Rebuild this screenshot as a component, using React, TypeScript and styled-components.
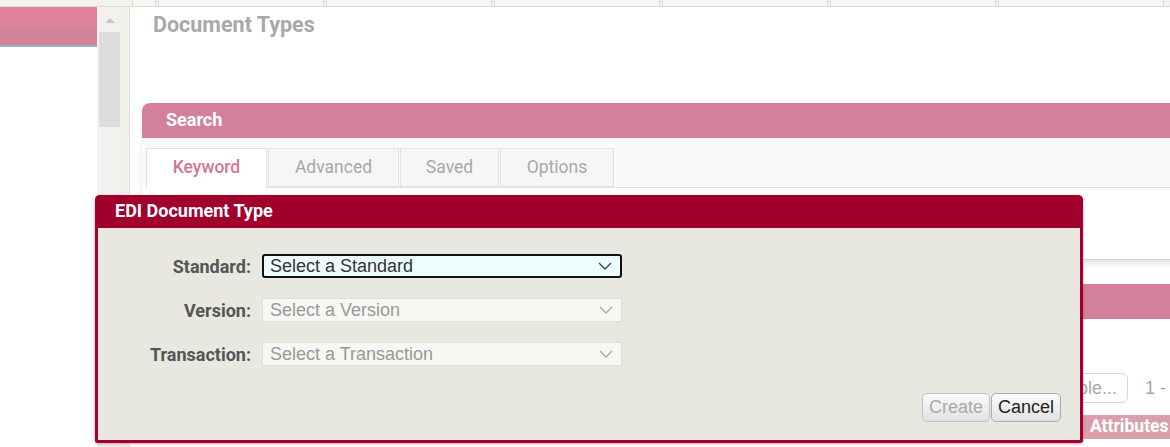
import styled, { createGlobalStyle } from "styled-components";

const GlobalStyle = createGlobalStyle`
  html, body {
    margin: 0;
    padding: 0;
  }
  body {
    width: 1170px;
    height: 447px;
    overflow: hidden;
    background: #f2f2ee;
    font-family: Roboto, "Liberation Sans", sans-serif;
  }
`;

const topTabs = [24, 166, 166, 166, 166, 166, 166];
const searchTabs = [
  { label: "Keyword", width: 121, active: true },
  { label: "Advanced", width: 131, active: false },
  { label: "Saved", width: 99, active: false },
  { label: "Options", width: 114, active: false },
];
const columns = [
  { label: "Name", width: 300 },
  { label: "Description", width: 380 },
  { label: "Version", width: 258 },
  { label: "Attributes", width: 200 },
];
const fields = [
  { label: "Standard:", value: "Select a Standard", focused: true },
  { label: "Version:", value: "Select a Version", focused: false },
  { label: "Transaction:", value: "Select a Transaction", focused: false },
];

const Chevron = ({ color }: { color: string }) => (
  <svg width="14" height="8" viewBox="0 0 14 8">
    <polyline points="1,1 7,7 13,1" fill="none" stroke={color} strokeWidth="1.3" />
  </svg>
);

const App = () => {
  return (
    <>
      <GlobalStyle />
      <Page>
        <TopStrip>
          {topTabs.map((w, i) => (
            <TopTab key={i} $width={w} />
          ))}
        </TopStrip>
        <Body>
          <Sidebar>
            <SideHeader>
              <span />
              <span />
            </SideHeader>
          </Sidebar>
          <ScrollBar>
            <ScrollArrow />
            <ScrollThumb />
          </ScrollBar>
          <Gutter />
          <Main>
            <Title>Document Types</Title>
            <Panel>
              <PanelHeader>Search</PanelHeader>
              <SearchBody>
                <TabRow>
                  {searchTabs.map((t) => (
                    <Tab key={t.label} $width={t.width} $active={t.active}>
                      {t.label}
                    </Tab>
                  ))}
                </TabRow>
                <TabContent />
              </SearchBody>
            </Panel>
            <Panel>
              <PanelHeader />
              <ResultsBody>
                <Toolbar>
                  <GhostButton>Disable...</GhostButton>
                  <Pager>1 - 20 of 20</Pager>
                </Toolbar>
                <HeaderRow>
                  {columns.map((c) => (
                    <HeaderCell key={c.label} $width={c.width}>
                      {c.label}
                    </HeaderCell>
                  ))}
                </HeaderRow>
                <DataRow>
                  <DataCell $width={300}>ANSI X12</DataCell>
                  <DataCell $width={380}>Purchase Order</DataCell>
                  <DataCell $width={258}>004010</DataCell>
                </DataRow>
              </ResultsBody>
            </Panel>
          </Main>
        </Body>

        <Modal>
          <ModalHeader>EDI Document Type</ModalHeader>
          <ModalBody>
            <Form>
              {fields.map((f) => (
                <FieldRow key={f.label}>
                  <Label>{f.label}</Label>
                  <SelectBox $focused={f.focused}>
                    <span>{f.value}</span>
                    <Chevron color={f.focused ? "#444" : "#a8a8a8"} />
                  </SelectBox>
                </FieldRow>
              ))}
            </Form>
            <Footer>
              <Button disabled>Create</Button>
              <Button>Cancel</Button>
            </Footer>
          </ModalBody>
        </Modal>
      </Page>
    </>
  );
};

const Page = styled.div`
  position: relative;
  width: 1170px;
  height: 447px;
  overflow: hidden;
  display: flex;
  flex-direction: column;
`;
const TopStrip = styled.div`
  height: 6px;
  flex-shrink: 0;
  display: flex;
  gap: 2px;
  padding-left: 132px;
  border-bottom: 1px solid #dcdcd6;
  background: #f2f2ee;
`;
const TopTab = styled.div<{ $width: number }>`
  width: ${({ $width }) => $width}px;
  box-sizing: border-box;
  flex-shrink: 0;
  border-left: 1px solid #dadad4;
  border-right: 1px solid #dadad4;
  background: #f6f6f2;
`;
const Body = styled.div`
  flex: 1;
  display: flex;
  min-height: 0;
`;
const Sidebar = styled.div`
  width: 97px;
  flex-shrink: 0;
  background: #fff;
`;
const SideHeader = styled.div`
  display: flex;
  flex-direction: column;
  border-bottom: 2px solid #93b3d3;
  span {
    height: 20px;
    background: #e0809b;
  }
  span + span {
    height: 18px;
    background: #d08399;
  }
`;
const ScrollBar = styled.div`
  width: 21px;
  margin-left: 2px;
  flex-shrink: 0;
  background: #f1f1ef;
  display: flex;
  flex-direction: column;
  align-items: center;
`;
const ScrollArrow = styled.div`
  width: 0;
  height: 0;
  margin: 11px 0 9px;
  border-left: 5px solid transparent;
  border-right: 5px solid transparent;
  border-bottom: 5px solid #c4c4c4;
`;
const ScrollThumb = styled.div`
  width: 100%;
  height: 95px;
  background: #dddddd;
`;
const Gutter = styled.div`
  width: 9px;
  flex-shrink: 0;
  background: #f0f0eb;
  border-right: 1px solid #e4e4de;
`;
const Main = styled.div`
  width: 1140px;
  flex-shrink: 0;
  background: #fff;
  padding-left: 12px;
`;
const Title = styled.h1`
  margin: 6px 0 0 11px;
  height: 24px;
  line-height: 24px;
  font-size: 21.5px;
  font-weight: 700;
  color: #a9a9a9;
`;
const Panel = styled.section`
  margin-top: 66px;
  & + & {
    margin-top: 24px;
  }
`;
const PanelHeader = styled.div`
  height: 35px;
  line-height: 34px;
  padding-left: 24px;
  border-top-left-radius: 8px;
  background: #d4809a;
  color: #fff;
  font-size: 18px;
  font-weight: 700;
`;
const SearchBody = styled.div`
  background: #fafafa;
  padding: 10px 0 0 4px;
  border-bottom: 1px solid #d6d6d6;
  box-shadow: 0 4px 6px rgba(0, 0, 0, 0.1);
`;
const TabRow = styled.div`
  display: flex;
  gap: 1px;
  height: 39px;
  border-bottom: 1px solid #e2e2e2;
`;
const Tab = styled.div<{ $width: number; $active: boolean }>`
  width: ${({ $width }) => $width}px;
  box-sizing: border-box;
  height: ${({ $active }) => ($active ? 40 : 39)}px;
  padding-bottom: ${({ $active }) => ($active ? 3 : 2)}px;
  border: 1px solid #e2e2e2;
  border-bottom: ${({ $active }) => ($active ? "none" : "1px solid #e2e2e2")};
  background: ${({ $active }) => ($active ? "#fff" : "#f6f6f6")};
  color: ${({ $active }) => ($active ? "#cf7891" : "#a8a8a8")};
  font-weight: ${({ $active }) => ($active ? 500 : 400)};
  font-size: 17.5px;
  display: flex;
  align-items: center;
  justify-content: center;
`;
const TabContent = styled.div`
  height: 71px;
  margin-left: -4px;
  background: #fff;
`;
const ResultsBody = styled.div`
  background: #fff;
  padding-top: 54px;
`;
const Toolbar = styled.div`
  display: flex;
  align-items: center;
  justify-content: flex-end;
  gap: 17px;
  height: 30px;
  padding-right: 46px;
`;
const GhostButton = styled.div`
  height: 30px;
  box-sizing: border-box;
  padding: 0 10px;
  border: 1px solid #d6d6d6;
  border-radius: 6px;
  background: #fff;
  color: #a8a8a8;
  font-family: "Liberation Sans", Arial, sans-serif;
  font-size: 18px;
  line-height: 28px;
`;
const Pager = styled.span`
  color: #a8a8a8;
  font-family: "Liberation Sans", Arial, sans-serif;
  font-size: 18px;
`;
const HeaderRow = styled.div`
  display: flex;
  margin-top: 12px;
  height: 24px;
  background: #da9fad;
`;
const HeaderCell = styled.div<{ $width: number }>`
  width: ${({ $width }) => $width}px;
  flex-shrink: 0;
  padding-left: 10px;
  box-sizing: border-box;
  color: #fff;
  font-weight: 700;
  font-size: 17.5px;
  line-height: 22px;
`;
const DataRow = styled.div`
  display: flex;
  height: 24px;
  padding-top: 5px;
`;
const DataCell = styled.div<{ $width: number }>`
  width: ${({ $width }) => $width}px;
  padding-left: 10px;
  box-sizing: border-box;
  color: #777;
  font-size: 16px;
`;

const Modal = styled.div`
  position: absolute;
  left: 95px;
  top: 195px;
  width: 988px;
  height: 248px;
  box-sizing: border-box;
  border: 3px solid #a1002c;
  border-top: none;
  border-radius: 5px 5px 3px 3px;
  background: #e8e8e1;
  box-shadow: 0 1px 3px rgba(161, 0, 44, 0.35);
  display: flex;
  flex-direction: column;
`;
const ModalHeader = styled.div`
  height: 33px;
  margin: 0 -3px;
  padding-left: 20px;
  border-radius: 5px 5px 0 0;
  background: #a1002c;
  color: #fff;
  font-size: 18px;
  font-weight: 700;
  line-height: 32px;
`;
const ModalBody = styled.div`
  flex: 1;
  display: flex;
  flex-direction: column;
  padding: 26px 19px 18px 0;
`;
const Form = styled.div`
  display: flex;
  flex-direction: column;
  gap: 20px;
`;
const FieldRow = styled.div`
  display: grid;
  grid-template-columns: 153px 360px;
  column-gap: 11px;
  align-items: center;
`;
const Label = styled.label`
  text-align: right;
  color: #555;
  font-size: 18px;
  font-weight: 700;
`;
const SelectBox = styled.div<{ $focused: boolean }>`
  height: 24px;
  box-sizing: border-box;
  display: flex;
  align-items: center;
  justify-content: space-between;
  padding: 0 8px 0 ${({ $focused }) => ($focused ? 6 : 7)}px;
  border: ${({ $focused }) => ($focused ? "2px solid #111" : "1px solid #dedfd8")};
  border-radius: ${({ $focused }) => ($focused ? 3 : 1)}px;
  background: ${({ $focused }) => ($focused ? "#edfdfd" : "#f7f7f3")};
  color: ${({ $focused }) => ($focused ? "#333" : "#999")};
  font-family: "Liberation Sans", Arial, sans-serif;
  font-size: 18px;
`;
const Footer = styled.div`
  margin-top: auto;
  display: flex;
  justify-content: flex-end;
  gap: 1px;
`;
const Button = styled.button`
  height: 29px;
  padding: 0 6px;
  border: 1px solid #ababab;
  border-radius: 5px;
  background: linear-gradient(#fbfbfb, #e2e2e2);
  color: #222;
  font-family: "Liberation Sans", Arial, sans-serif;
  font-size: 18px;
  &:disabled {
    color: #aaa;
    border-color: #c2c2c2;
  }
`;

export default App;
